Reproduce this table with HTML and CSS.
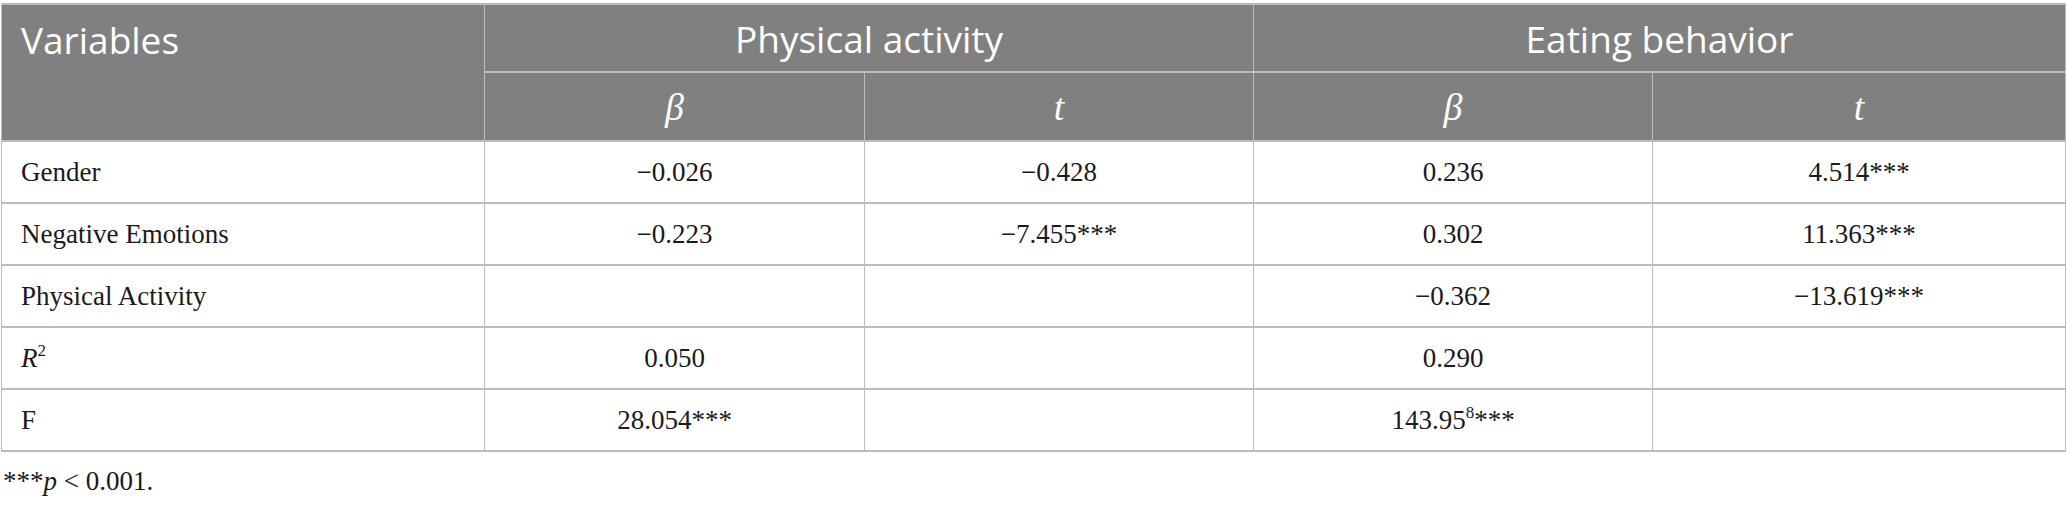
FILE: index.html
```html
<!DOCTYPE html>
<html lang="en">
<head>
<meta charset="utf-8">
<title>Regression table</title>
<link rel="stylesheet" href="styles.css">
</head>
<body>
<table class="tbl">
  <colgroup>
    <col class="c-var">
    <col class="c-pb">
    <col class="c-pt">
    <col class="c-eb">
    <col class="c-et">
  </colgroup>
  <thead>
    <tr class="h1">
      <th rowspan="2" class="var">Variables</th>
      <th colspan="2">Physical activity</th>
      <th colspan="2">Eating behavior</th>
    </tr>
    <tr class="h2">
      <th class="sym">β</th>
      <th class="sym">t</th>
      <th class="sym">β</th>
      <th class="sym">t</th>
    </tr>
  </thead>
  <tbody>
    <tr>
      <td class="lbl">Gender</td>
      <td>−0.026</td>
      <td>−0.428</td>
      <td>0.236</td>
      <td>4.514***</td>
    </tr>
    <tr>
      <td class="lbl">Negative Emotions</td>
      <td>−0.223</td>
      <td>−7.455***</td>
      <td>0.302</td>
      <td>11.363***</td>
    </tr>
    <tr>
      <td class="lbl">Physical Activity</td>
      <td></td>
      <td></td>
      <td>−0.362</td>
      <td>−13.619***</td>
    </tr>
    <tr>
      <td class="lbl"><i>R</i><sup>2</sup></td>
      <td>0.050</td>
      <td></td>
      <td>0.290</td>
      <td></td>
    </tr>
    <tr>
      <td class="lbl">F</td>
      <td>28.054***</td>
      <td></td>
      <td>143.95<sup>8</sup>***</td>
      <td></td>
    </tr>
  </tbody>
</table>
<p class="note">***<i>p</i> &lt; 0.001.</p>
</body>
</html>
```

FILE: styles.css
```css
html, body {
  margin: 0;
  padding: 0;
  background: #ffffff;
}

body {
  padding: 3px 2px 0 1px;
  font-family: "Liberation Serif", "Times New Roman", serif;
  color: #1a1a1a;
}

.tbl {
  border-collapse: collapse;
  table-layout: fixed;
  width: 2064px;
}

.c-var { width: 483px; }
.c-pb { width: 380px; }
.c-pt { width: 389px; }
.c-eb { width: 399px; }
.c-et { width: 413px; }

.tbl th,
.tbl td {
  padding: 0;
  border-left: 1px solid #bcbcbc;
  border-right: 1px solid #bcbcbc;
  border-top: 2px solid #bcbcbc;
  border-bottom: 2px solid #bcbcbc;
}

.tbl th {
  background: #7f807f;
  color: #ffffff;
  font-family: "Open Sans", "Noto Sans", sans-serif;
  font-weight: 400;
  font-size: 37px;
  text-align: center;
  vertical-align: middle;
}

.tbl .h1 th {
  height: 66px;
}

.tbl .h2 th {
  height: 67px;
}

.tbl th.var {
  text-align: left;
  vertical-align: top;
  padding: 9px 0 0 19px;
}

.tbl th.sym {
  font-family: "Liberation Serif", "Times New Roman", serif;
  font-style: italic;
  font-weight: 400;
  font-size: 38px;
}

.tbl td {
  height: 60px;
  font-size: 27px;
  text-align: center;
  vertical-align: middle;
}

.tbl td.lbl {
  text-align: left;
  padding-left: 19px;
}

.tbl sup {
  font-size: 17px;
  line-height: 0;
  vertical-align: 11px;
}

.note {
  margin: 14px 0 0 2px;
  font-size: 27px;
  color: #1a1a1a;
}
```
